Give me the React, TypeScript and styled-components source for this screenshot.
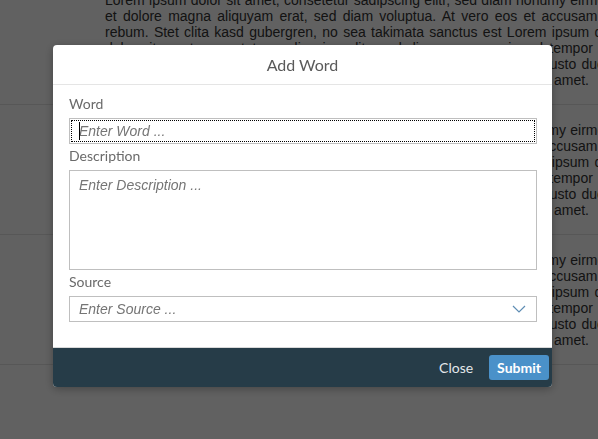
import React from 'react'
import styled, { createGlobalStyle } from 'styled-components'

const GlobalStyle = createGlobalStyle`
  html, body {
    margin: 0;
    padding: 0;
    width: 598px;
    height: 439px;
    overflow: hidden;
    background: #ffffff;
  }
`

const LOREM =
  'Lorem ipsum dolor sit amet, consetetur sadipscing elitr, sed diam nonumy eirmod tempor invidunt ut labore et dolore magna aliquyam erat, sed diam voluptua. At vero eos et accusam et justo duo dolores et ea rebum. Stet clita kasd gubergren, no sea takimata sanctus est Lorem ipsum dolor sit amet.'

const StyledPage = styled.div`
  margin-top: -25px;
  width: 598px;
  overflow: hidden;
`

const StyledItem = styled.div`
  padding: 17px 0 16px 105px;
  border-bottom: 1px solid #e5e5e5;
`

const StyledItemText = styled.p`
  margin: 0;
  width: 668px;
  font-family: 'Liberation Sans', Arial, sans-serif;
  font-size: 14px;
  line-height: 16px;
  color: #333333;
  text-align: justify;
`

const StyledOverlay = styled.div`
  position: fixed;
  inset: 0;
  background: rgba(0, 0, 0, 0.62);
`

const StyledDialog = styled.div`
  position: fixed;
  left: 53px;
  top: 45px;
  width: 499px;
  display: flex;
  flex-direction: column;
  background: #ffffff;
  border-radius: 4px;
  box-shadow: 0 2px 10px rgba(0, 0, 0, 0.3);
  font-family: Lato, 'Noto Sans', sans-serif;
  overflow: hidden;
`

const StyledHeader = styled.div`
  height: 39px;
  display: flex;
  align-items: center;
  justify-content: center;
  border-bottom: 1px solid #e5e5e5;
  font-size: 16px;
  color: #5a5a5a;
`

const StyledContent = styled.div`
  display: flex;
  flex-direction: column;
  padding: 10px 16px 25px;
`

const StyledLabel = styled.label<{ first?: boolean }>`
  display: block;
  margin-top: ${({ first }) => (first ? '0' : '3px')};
  margin-bottom: 5px;
  font-size: 14px;
  line-height: 18px;
  color: #6a6a6a;
`

const fieldBase = `
  box-sizing: border-box;
  width: 468px;
  border: 1px solid #bfbfbf;
  background: #ffffff;
  font-family: 'Liberation Sans', Arial, sans-serif;
  font-size: 14px;
  color: #333333;
  padding: 0 9px;
  &::placeholder {
    font-style: italic;
    color: #757575;
  }
`

const StyledFieldWrap = styled.div<{ focused?: boolean }>`
  position: relative;

  &::after {
    content: '';
    display: ${({ focused }) => (focused ? 'block' : 'none')};
    position: absolute;
    left: 10px;
    top: 4px;
    width: 1px;
    height: 18px;
    background: #000000;
  }
`

const StyledInput = styled.input<{ focused?: boolean }>`
  ${fieldBase}
  display: block;
  height: 26px;
  outline: ${({ focused }) => (focused ? '1px dotted #000000' : 'none')};
  outline-offset: -3px;
`

const StyledTextArea = styled.textarea`
  ${fieldBase}
  display: block;
  height: 100px;
  padding-top: 6px;
  resize: none;
  outline: none;
  line-height: 16px;
`

const StyledSelect = styled.div`
  ${fieldBase}
  height: 26px;
  display: flex;
  align-items: center;
  justify-content: space-between;
  padding-right: 10px;
`

const StyledSelectPlaceholder = styled.span`
  font-style: italic;
  color: #757575;
`

const StyledFooter = styled.div`
  height: 39px;
  display: flex;
  align-items: center;
  justify-content: flex-end;
  gap: 8px;
  padding-right: 3px;
  border-top: 1px solid #d9d9d9;
  background: #263c48;
`

const StyledButton = styled.button<{ emphasized?: boolean }>`
  height: 25px;
  padding: 0 8px;
  border: none;
  border-radius: 3px;
  font-family: Lato, 'Noto Sans', sans-serif;
  font-size: 14px;
  font-weight: ${({ emphasized }) => (emphasized ? 700 : 400)};
  color: ${({ emphasized }) => (emphasized ? '#ffffff' : '#e3e8eb')};
  background: ${({ emphasized }) => (emphasized ? '#4a91c9' : 'transparent')};
  cursor: pointer;
`

const Chevron = () => (
  <svg width="14" height="8" viewBox="0 0 14 8">
    <polyline
      points="1,1 7,7 13,1"
      fill="none"
      stroke="#5f8db4"
      strokeWidth="1.2"
    />
  </svg>
)

const App = () => (
  <>
    <GlobalStyle />
    <StyledPage>
      {[0, 1, 2].map((i) => (
        <StyledItem key={i}>
          <StyledItemText>
            {LOREM} {LOREM}
          </StyledItemText>
        </StyledItem>
      ))}
    </StyledPage>
    <StyledOverlay />
    <StyledDialog>
      <StyledHeader>Add Word</StyledHeader>
      <StyledContent>
        <StyledLabel first>Word</StyledLabel>
        <StyledFieldWrap focused>
          <StyledInput focused placeholder="Enter Word ..." />
        </StyledFieldWrap>
        <StyledLabel>Description</StyledLabel>
        <StyledTextArea placeholder="Enter Description ..." />
        <StyledLabel>Source</StyledLabel>
        <StyledSelect>
          <StyledSelectPlaceholder>Enter Source ...</StyledSelectPlaceholder>
          <Chevron />
        </StyledSelect>
      </StyledContent>
      <StyledFooter>
        <StyledButton>Close</StyledButton>
        <StyledButton emphasized>Submit</StyledButton>
      </StyledFooter>
    </StyledDialog>
  </>
)

export default App
